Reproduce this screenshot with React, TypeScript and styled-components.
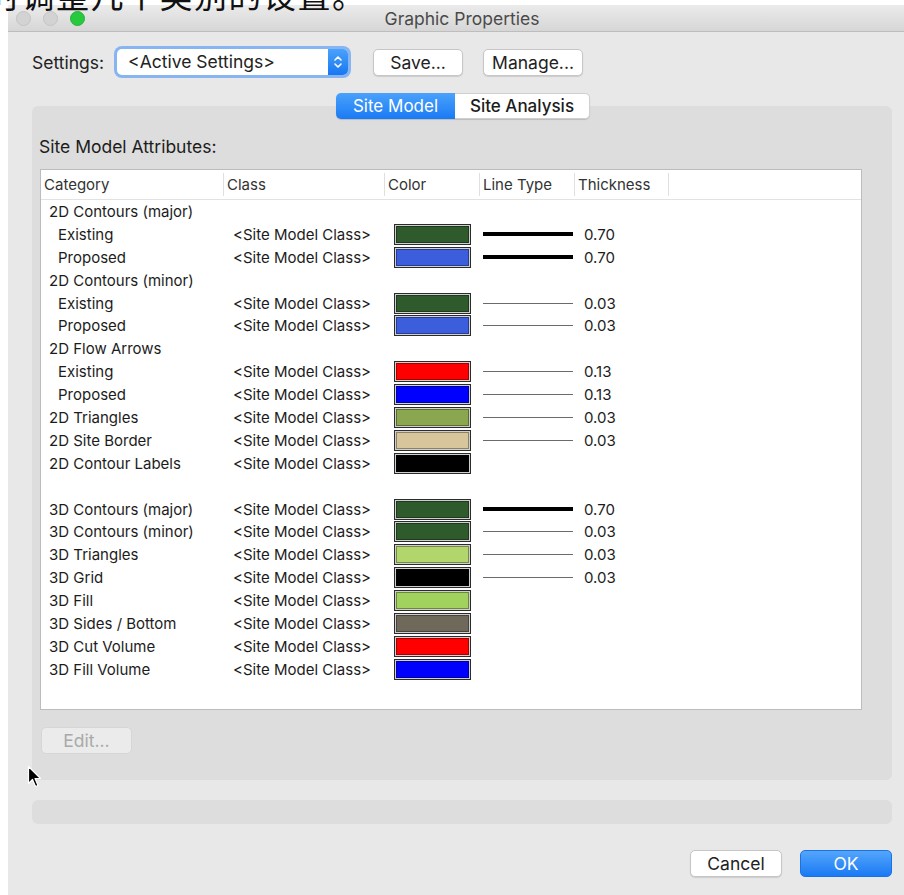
import styled, { createGlobalStyle, css } from "styled-components";

const GlobalStyle = createGlobalStyle`
  html, body {
    margin: 0;
    background: #ffffff;
    overflow: hidden;
  }
  body {
    font-family: Inter, "Liberation Sans", Arial, sans-serif;
    color: #222;
  }
`;

const COLS = "183px 161px 95px 95px 94px 1fr";

const Page = styled.div`
  position: relative;
  width: 904px;
  height: 895px;
  padding: 5px 0 0 8px;
  box-sizing: border-box;
  overflow: hidden;
`;

const Subtitle = styled.div`
  position: absolute;
  top: -22px;
  left: -13px;
  font-family: "Noto Sans CJK SC", sans-serif;
  font-size: 33px;
  line-height: 1;
  letter-spacing: 1.5px;
  color: #111;
  white-space: nowrap;
  z-index: 2;
`;

const Window = styled.div`
  width: 908px;
  height: 890px;
  background: #e8e8e8;
  display: flex;
  flex-direction: column;
`;

const TitleBar = styled.div`
  height: 27px;
  flex: none;
  display: grid;
  grid-template-columns: 1fr auto 1fr;
  align-items: center;
  background: linear-gradient(#ebebeb, #d6d6d6);
  border-bottom: 1px solid #bdbdbd;
  box-sizing: border-box;
`;

const Lights = styled.div`
  display: flex;
  gap: 12px;
  padding-left: 8px;
`;

const Light = styled.span<{ $on?: boolean }>`
  width: 15px;
  height: 15px;
  border-radius: 50%;
  box-sizing: border-box;
  background: ${(p) => (p.$on ? "#27c93f" : "#d3d3d3")};
  border: 1px solid ${(p) => (p.$on ? "#22b238" : "#c4c4c4")};
`;

const Title = styled.div`
  font-size: 17.5px;
  color: #4a4a4a;
`;

const Body = styled.div`
  flex: 1;
  display: flex;
  flex-direction: column;
  padding: 14px 24px 0 24px;
`;

const SettingsRow = styled.div`
  display: flex;
  align-items: center;
  height: 32px;
`;

const Label = styled.span`
  font-size: 17.5px;
  color: #222;
  margin-right: 13px;
`;

const Select = styled.div`
  width: 231px;
  height: 26px;
  margin-right: 25px;
  display: flex;
  align-items: stretch;
  background: #fff;
  border-radius: 5px;
  box-shadow: 0 0 0 3px #86b5f2, 0 0 0 1px #6aa0ea;
  overflow: hidden;
`;

const SelectText = styled.span`
  flex: 1;
  padding-left: 11px;
  font-size: 17.5px;
  line-height: 26px;
  color: #222;
`;

const Stepper = styled.span`
  width: 20px;
  display: grid;
  place-items: center;
  background: linear-gradient(#4aa2fb, #1877f2);
`;

const Button = styled.button<{ $w: number; $primary?: boolean; $disabled?: boolean }>`
  width: ${(p) => p.$w}px;
  height: 27px;
  border-radius: 5px;
  font-family: inherit;
  font-size: 17.5px;
  padding: 0;
  cursor: default;
  ${(p) =>
    p.$primary
      ? css`
          background: linear-gradient(#54a6fb, #1a7af5);
          border: 1px solid #1a72e6;
          color: #fff;
        `
      : p.$disabled
      ? css`
          background: #ebebeb;
          border: 1px solid #d6d6d6;
          color: #a9a9a9;
        `
      : css`
          background: #fff;
          border: 1px solid #c6c6c6;
          color: #222;
          box-shadow: 0 1px 1px rgba(0, 0, 0, 0.12);
        `}
`;

const Gap = styled.span<{ $w: number }>`
  width: ${(p) => p.$w}px;
  flex: none;
`;

const Tabs = styled.div`
  align-self: center;
  display: flex;
  margin: 15px 0 -13px 2px;
  position: relative;
  z-index: 1;
  border-radius: 5px;
  box-shadow: 0 1px 1px rgba(0, 0, 0, 0.15);
`;

const Tab = styled.div<{ $active?: boolean; $w: number }>`
  width: ${(p) => p.$w}px;
  height: 26px;
  display: grid;
  place-items: center;
  font-size: 17px;
  box-sizing: border-box;
  ${(p) =>
    p.$active
      ? css`
          background: linear-gradient(#4aa2fb, #1a7af5);
          color: #fff;
          border-radius: 5px 0 0 5px;
        `
      : css`
          background: #fff;
          color: #1c1c1c;
          font-weight: 500;
          border: 1px solid #cfcfcf;
          border-left: none;
          border-radius: 0 5px 5px 0;
        `}
`;

const Group = styled.div`
  height: 674px;
  background: #dddddd;
  border-radius: 6px;
  padding: 30px 30px 0 8px;
  box-sizing: border-box;
  display: flex;
  flex-direction: column;
`;

const GroupTitle = styled.div`
  font-size: 17.5px;
  color: #1c1c1c;
  margin-left: -1px;
  height: 22px;
  line-height: 22px;
  margin-bottom: 11px;
`;

const Table = styled.div`
  height: 541px;
  background: #fff;
  border: 1px solid #bcbcbc;
  box-sizing: border-box;
`;

const HeaderRow = styled.div`
  display: grid;
  grid-template-columns: ${COLS};
  height: 29px;
  border-bottom: 1px solid #e2e2e2;
`;

const HeaderCell = styled.div`
  font-size: 15px;
  color: #333;
  padding-left: 3px;
  display: flex;
  align-items: center;
  border-right: 1px solid #e0e0e0;
  margin: 3px 0;
  &:last-child {
    border-right: none;
  }
`;

const Row = styled.div`
  display: grid;
  grid-template-columns: ${COLS};
  height: 22.9px;
  align-items: center;
  font-size: 15px;
  color: #1c1c1c;
`;

const Category = styled.span<{ $indent?: boolean }>`
  padding-left: ${(p) => (p.$indent ? 17 : 8)}px;
  white-space: nowrap;
`;

const ClassCell = styled.span`
  padding-left: 9px;
  white-space: nowrap;
`;

const Cell = styled.span`
  display: flex;
  align-items: center;
`;

const Swatch = styled.span`
  margin-left: 9px;
  width: 77px;
  height: 21px;
  box-sizing: border-box;
  border: 1px solid #2b2b2b;
  padding: 1px;
  background: #cfcfcf;
  display: flex;
`;

const SwatchFill = styled.span<{ $c: string }>`
  flex: 1;
  background: ${(p) => p.$c};
  border: 1px solid rgba(0, 0, 0, 0.35);
`;

const LineSample = styled.span<{ $thick?: boolean }>`
  display: block;
  margin-left: 3px;
  width: 90px;
  height: ${(p) => (p.$thick ? 4 : 1)}px;
  background: ${(p) => (p.$thick ? "#000" : "#6a6a6a")};
`;

const Thickness = styled.span`
  padding-left: 9px;
`;

const EditRow = styled.div`
  margin-top: 17px;
  padding-left: 1px;
`;

const StatusBar = styled.div`
  margin-top: 20px;
  height: 24px;
  background: #dddddd;
  border-radius: 6px;
`;

const Footer = styled.div`
  margin-top: 26px;
  display: flex;
  justify-content: flex-end;
  gap: 18px;
`;

const Pointer = styled.svg`
  position: absolute;
  left: 27px;
  top: 765px;
`;

type Line = { label: string; indent?: boolean; color?: string; thick?: boolean; t?: string };

const rows: Line[] = [
  { label: "2D Contours (major)" },
  { label: "Existing", indent: true, color: "#2e5a2c", thick: true, t: "0.70" },
  { label: "Proposed", indent: true, color: "#3c5edd", thick: true, t: "0.70" },
  { label: "2D Contours (minor)" },
  { label: "Existing", indent: true, color: "#2e5a2c", t: "0.03" },
  { label: "Proposed", indent: true, color: "#3c5edd", t: "0.03" },
  { label: "2D Flow Arrows" },
  { label: "Existing", indent: true, color: "#ff0000", t: "0.13" },
  { label: "Proposed", indent: true, color: "#0000ff", t: "0.13" },
  { label: "2D Triangles", color: "#8aa64e", t: "0.03" },
  { label: "2D Site Border", color: "#d7c59b", t: "0.03" },
  { label: "2D Contour Labels", color: "#000000" },
  { label: "" },
  { label: "3D Contours (major)", color: "#2e5a2c", thick: true, t: "0.70" },
  { label: "3D Contours (minor)", color: "#2e5a2c", t: "0.03" },
  { label: "3D Triangles", color: "#b3d66c", t: "0.03" },
  { label: "3D Grid", color: "#000000", t: "0.03" },
  { label: "3D Fill", color: "#a2d25e" },
  { label: "3D Sides / Bottom", color: "#6e695b" },
  { label: "3D Cut Volume", color: "#ff0000" },
  { label: "3D Fill Volume", color: "#0000ff" },
];

export default function App() {
  return (
    <Page>
      <GlobalStyle />
      <Subtitle>时调整几个类别的设置。</Subtitle>
      <Window>
        <TitleBar>
          <Lights>
            <Light />
            <Light />
            <Light $on />
          </Lights>
          <Title>Graphic Properties</Title>
          <span />
        </TitleBar>
        <Body>
          <SettingsRow>
            <Label>Settings:</Label>
            <Select>
              <SelectText>&lt;Active Settings&gt;</SelectText>
              <Stepper>
                <svg width="10" height="16" viewBox="0 0 10 16">
                  <path d="M2 6 L5 3 L8 6 M2 10 L5 13 L8 10" fill="none" stroke="#fff" strokeWidth="1.6" strokeLinecap="round" strokeLinejoin="round" />
                </svg>
              </Stepper>
            </Select>
            <Button $w={90}>Save...</Button>
            <Gap $w={20} />
            <Button $w={100}>Manage...</Button>
          </SettingsRow>

          <Tabs>
            <Tab $active $w={119}>Site Model</Tab>
            <Tab $w={135}>Site Analysis</Tab>
          </Tabs>
          <Group>
            <GroupTitle>Site Model Attributes:</GroupTitle>
            <Table>
              <HeaderRow>
                <HeaderCell>Category</HeaderCell>
                <HeaderCell>Class</HeaderCell>
                <HeaderCell>Color</HeaderCell>
                <HeaderCell>Line Type</HeaderCell>
                <HeaderCell>Thickness</HeaderCell>
                <HeaderCell />
              </HeaderRow>
              {rows.map((r, i) => (
                <Row key={i}>
                  <Category $indent={r.indent}>{r.label}</Category>
                  <ClassCell>{r.color ? "<Site Model Class>" : ""}</ClassCell>
                  <Cell>
                    {r.color && (
                      <Swatch>
                        <SwatchFill $c={r.color} />
                      </Swatch>
                    )}
                  </Cell>
                  <Cell>{r.t && <LineSample $thick={r.thick} />}</Cell>
                  <Thickness>{r.t}</Thickness>
                  <span />
                </Row>
              ))}
            </Table>
            <EditRow>
              <Button $w={91} $disabled>
                Edit...
              </Button>
            </EditRow>
          </Group>
          <StatusBar />
          <Footer>
            <Button $w={92}>Cancel</Button>
            <Button $w={92} $primary>
              OK
            </Button>
          </Footer>
        </Body>
      </Window>
      <Pointer width="16" height="24" viewBox="0 0 16 24">
        <path d="M1.5 1.5 L1.5 18.5 L5.5 14.5 L8.5 21.5 L11 20.5 L8 13.5 L13.5 13.5 Z" fill="#000" stroke="#fff" strokeWidth="1.2" strokeLinejoin="round" />
      </Pointer>
    </Page>
  );
}
